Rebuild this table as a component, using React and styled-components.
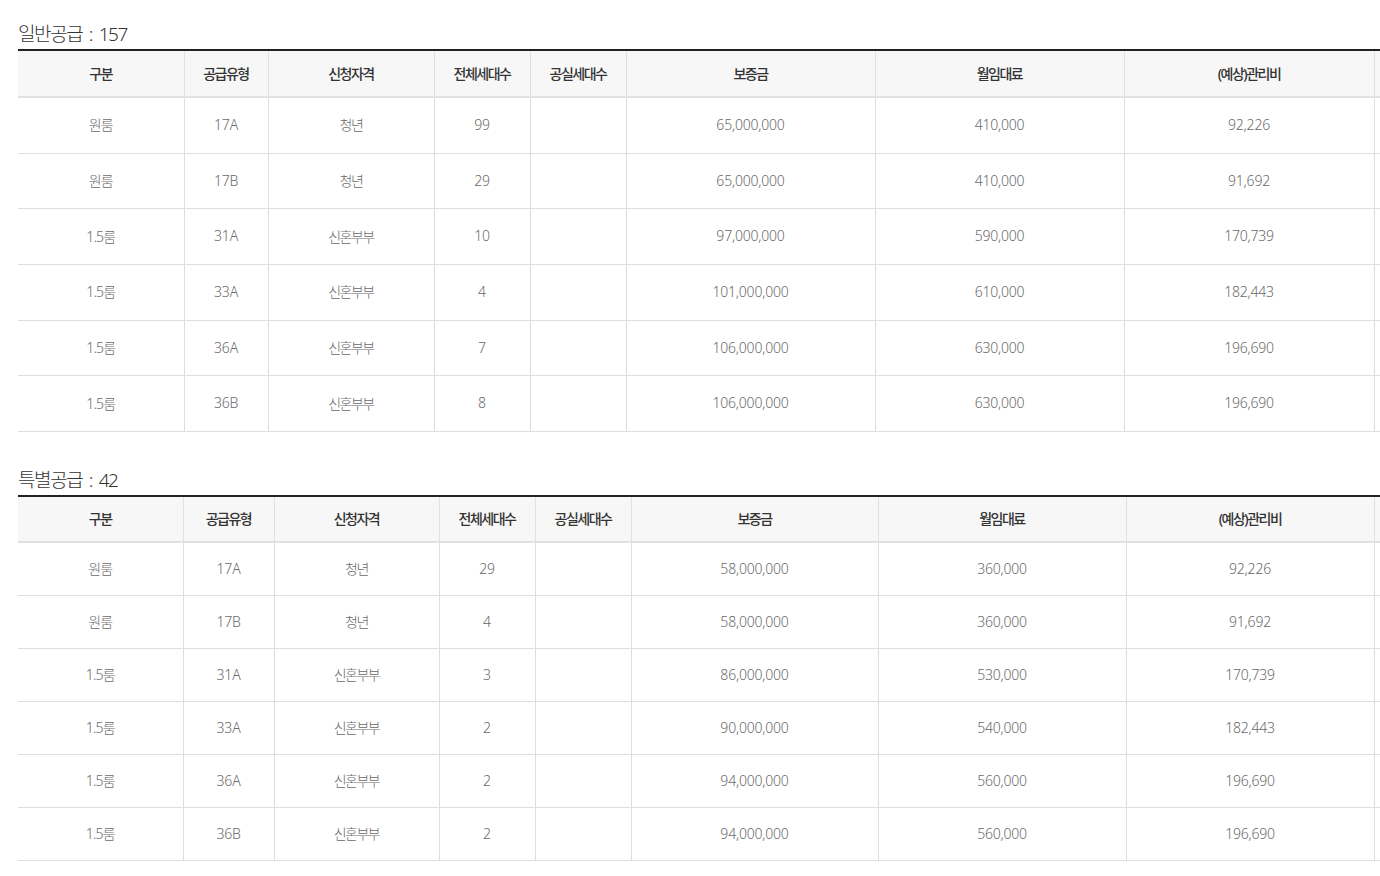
import React from "react";
import styled, { createGlobalStyle } from "styled-components";

const GlobalStyle = createGlobalStyle`
  html, body {
    margin: 0;
    padding: 0;
    background: #fff;
    overflow: hidden;
  }
  body {
    font-family: "Noto Sans", "Noto Sans CJK KR", sans-serif;
  }
`;

const Page = styled.div`
  width: 1560px;
  padding: 22px 0 0 18px;
`;

const Section = styled.section`
  & + & {
    margin-top: 36px;
  }
`;

const Title = styled.h3`
  margin: 0;
  height: 27px;
  font-size: 19px;
  font-weight: 300;
  line-height: 24px;
  letter-spacing: -1.4px;
  word-spacing: 3px;
  color: #333;
`;

const Table = styled.table`
  width: 1500px;
  border-collapse: collapse;
  table-layout: fixed;
  border-top: 2px solid #222;
`;

const Th = styled.th`
  height: ${(p) => p.$h}px;
  padding: 0 0 2px;
  background: #f7f7f7;
  border-bottom: 2px solid #e1e1e1;
  border-left: 1px solid #e1e1e1;
  font-size: 14px;
  font-weight: 500;
  letter-spacing: -1.5px;
  color: #333;
  text-align: center;
  &:first-child {
    border-left: none;
  }
`;

const Td = styled.td`
  height: ${(p) => p.$h}px;
  padding: 0 0 2px;
  border-bottom: 1px solid #dedede;
  border-left: 1px solid #dedede;
  font-size: 14px;
  font-weight: 300;
  letter-spacing: ${(p) => p.$ls};
  color: #6a6a6a;
  text-align: center;
  &:first-child {
    border-left: none;
  }
`;

const heads = ["구분", "공급유형", "신청자격", "전체세대수", "공실세대수", "보증금", "월임대료", "(예상)관리비", ""];

const general = [
  ["원룸", "17A", "청년", "99", "", "65,000,000", "410,000", "92,226"],
  ["원룸", "17B", "청년", "29", "", "65,000,000", "410,000", "91,692"],
  ["1.5룸", "31A", "신혼부부", "10", "", "97,000,000", "590,000", "170,739"],
  ["1.5룸", "33A", "신혼부부", "4", "", "101,000,000", "610,000", "182,443"],
  ["1.5룸", "36A", "신혼부부", "7", "", "106,000,000", "630,000", "196,690"],
  ["1.5룸", "36B", "신혼부부", "8", "", "106,000,000", "630,000", "196,690"],
];

const special = [
  ["원룸", "17A", "청년", "29", "", "58,000,000", "360,000", "92,226"],
  ["원룸", "17B", "청년", "4", "", "58,000,000", "360,000", "91,692"],
  ["1.5룸", "31A", "신혼부부", "3", "", "86,000,000", "530,000", "170,739"],
  ["1.5룸", "33A", "신혼부부", "2", "", "90,000,000", "540,000", "182,443"],
  ["1.5룸", "36A", "신혼부부", "2", "", "94,000,000", "560,000", "196,690"],
  ["1.5룸", "36B", "신혼부부", "2", "", "94,000,000", "560,000", "196,690"],
];

// korean columns are set tighter than number columns
const spacing = (j) => (j === 2 ? "-1.5px" : j === 0 ? "-0.8px" : "-0.2px");

const SupplyTable = ({ title, cols, rows, headH, rowH }) => (
  <Section>
    <Title>{title}</Title>
    <Table>
      <colgroup>
        {cols.map((w, i) => (
          <col key={i} style={{ width: w }} />
        ))}
      </colgroup>
      <thead>
        <tr>
          {heads.map((h, i) => (
            <Th key={i} $h={headH}>
              {h}
            </Th>
          ))}
        </tr>
      </thead>
      <tbody>
        {rows.map((r, i) => (
          <tr key={i}>
            {r.map((c, j) => (
              <Td key={j} $h={rowH} $ls={spacing(j)}>
                {c}
              </Td>
            ))}
            <Td $h={rowH} $ls="0" />
          </tr>
        ))}
      </tbody>
    </Table>
  </Section>
);

export default function App() {
  return (
    <Page>
      <GlobalStyle />
      <SupplyTable
        title="일반공급 : 157"
        cols={[166, 84, 166, 96, 96, 249, 249, 250, 144]}
        rows={general}
        headH={43}
        rowH={52.7}
      />
      <SupplyTable
        title="특별공급 : 42"
        cols={[165, 91, 165, 96, 96, 247, 248, 248, 144]}
        rows={special}
        headH={42}
        rowH={50}
      />
    </Page>
  );
}
